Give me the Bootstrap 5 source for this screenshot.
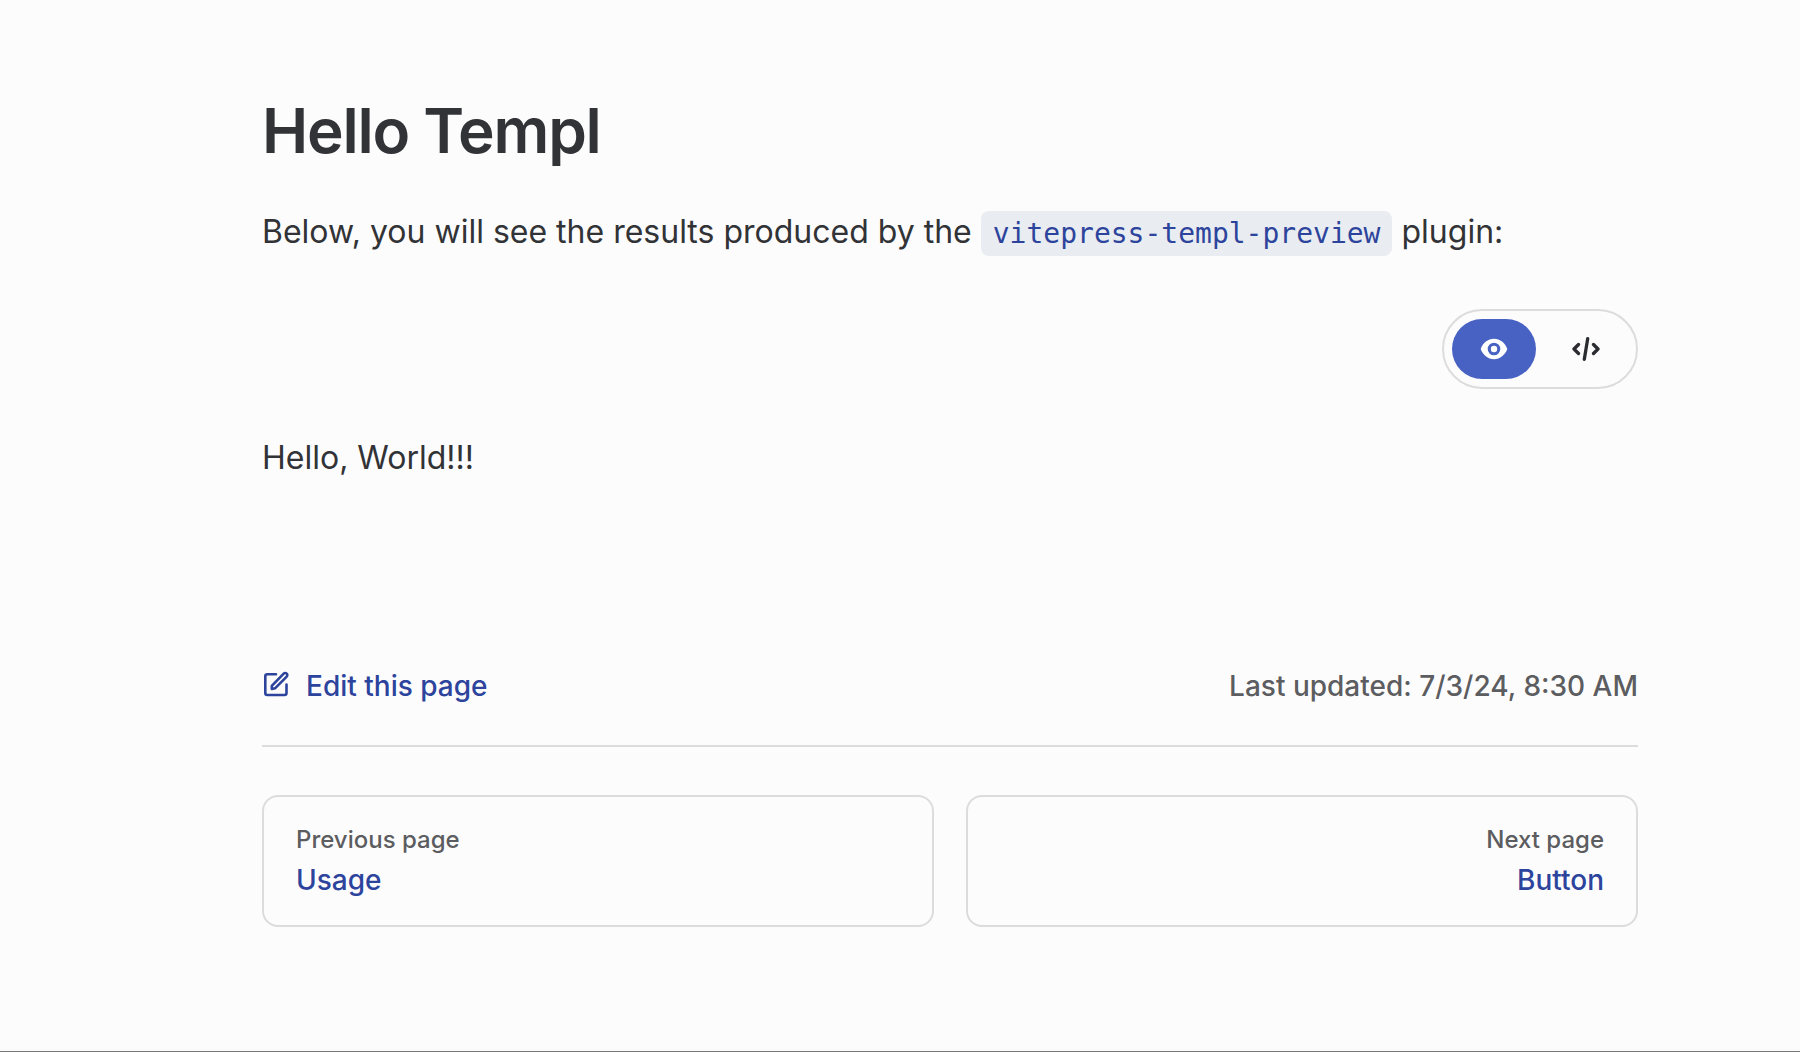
<!DOCTYPE html>
<html lang="en">
<head>
<meta charset="utf-8">
<meta name="viewport" content="width=device-width, initial-scale=1">
<title>Hello Templ</title>
<link href="https://cdn.jsdelivr.net/npm/bootstrap@5.3.0/dist/css/bootstrap.min.css" rel="stylesheet">
<style>
:root { --ink: #323336; --ink-soft: #5c5d60; --brand: #2d449d; --brand-fill: #4862c4; --line: #dcdcdc; }
body { background: #fcfcfd; color: var(--ink); font-family: Inter, sans-serif; font-size: 32px; line-height: 56px; border-bottom: 1px solid #777; }
.doc { padding: 91px 9% 64px 262px; }
.doc-title { font-size: 62px; line-height: 80px; font-weight: 600; letter-spacing: -0.02em; margin-bottom: 33px; }
.doc code { font-family: "DejaVu Sans Mono", monospace; font-size: 28px; color: var(--brand); background: #e9ecf0; border-radius: 8px; padding: 6px 12px; }
.switcher { margin: 47px 0 41px; border: 2px solid var(--line); border-radius: 40px; padding: 8px; gap: 8px; }
.switcher .btn { --bs-btn-padding-x: 28px; --bs-btn-padding-y: 16px; --bs-btn-border-width: 0; --bs-btn-border-radius: 30px; --bs-btn-color: #2b2c2f; --bs-btn-active-color: #fff; --bs-btn-active-bg: var(--brand-fill); line-height: 28px; }
.brand-link { color: var(--brand); font-size: 28px; font-weight: 500; text-decoration: none; }
.meta { margin-top: 168px; padding-bottom: 27px; border-bottom: 2px solid var(--line); font-size: 28px; line-height: 64px; font-weight: 500; color: var(--ink-soft); }
.pager { margin-top: 48px; }
.pager-link { border: 2px solid var(--line); border-radius: 16px; padding: 23px 32px 25px; line-height: 40px; font-weight: 500; text-decoration: none; }
.pager-desc { font-size: 24px; color: var(--ink-soft); }
</style>
<script src="https://cdn.jsdelivr.net/npm/bootstrap@5.3.0/dist/js/bootstrap.bundle.min.js" defer></script>
</head>
<body class="min-vh-100">
<main class="doc">
  <h1 class="doc-title">Hello Templ</h1>
  <p class="mb-0">Below, you will see the results produced by the <code>vitepress-templ-preview</code> plugin:</p>
  <div class="d-flex justify-content-end">
    <div class="switcher d-flex" role="group" aria-label="Preview mode">
      <button type="button" class="btn active" aria-label="Preview" aria-pressed="true">
        <svg class="d-block" width="28" height="28" viewBox="0 0 28 28" aria-hidden="true"><path fill="currentColor" fill-rule="evenodd" d="M14 3.800C8 3.800 2.800 8 .7 14 2.800 20 8 24.200 14 24.200S25.200 20 27.300 14C25.200 8 20 3.800 14 3.800ZM14 7.700a6.300 6.300 0 1 1 0 12.600 6.300 6.300 0 0 1 0-12.600Z"/><circle cx="14" cy="14" r="3.200" fill="currentColor"/></svg>
      </button>
      <button type="button" class="btn" aria-label="Code" aria-pressed="false">
        <svg class="d-block" width="28" height="28" viewBox="0 0 28 28" fill="none" stroke="currentColor" stroke-width="3.300" stroke-linecap="round" stroke-linejoin="round" aria-hidden="true"><path d="M6.500 9.500 2 14l4.500 4.500M21.500 9.500 26 14l-4.500 4.500M15.700 3.700 12.300 24.300"/></svg>
      </button>
    </div>
  </div>
  <p class="mb-0">Hello, World!!!</p>
  <footer>
    <div class="meta d-flex justify-content-between">
      <a href="#edit" class="brand-link d-flex align-items-center gap-3">
        <svg class="mb-1" width="28" height="28" viewBox="0 0 28 28" fill="none" stroke="currentColor" stroke-width="2.600" stroke-linecap="round" stroke-linejoin="round" aria-hidden="true"><path d="M14 4.300H5.300a2 2 0 0 0-2 2V23a2 2 0 0 0 2 2H22.500a2 2 0 0 0 2-2V14.500"/><path d="M9.800 19v-3.200L21.700 3.600a2.100 2.100 0 0 1 3 3L13 18.300Z"/></svg>
        Edit this page
      </a>
      <span>Last updated: <time datetime="2024-07-03T08:30">7/3/24, 8:30 AM</time></span>
    </div>
    <nav class="pager row g-0 gap-3" aria-label="Pager">
      <a href="#usage" class="pager-link col"><span class="pager-desc d-block">Previous page</span><span class="brand-link d-block">Usage</span></a>
      <a href="#button" class="pager-link col ms-3 text-end"><span class="pager-desc d-block">Next page</span><span class="brand-link d-block">Button</span></a>
    </nav>
  </footer>
</main>
</body>
</html>
